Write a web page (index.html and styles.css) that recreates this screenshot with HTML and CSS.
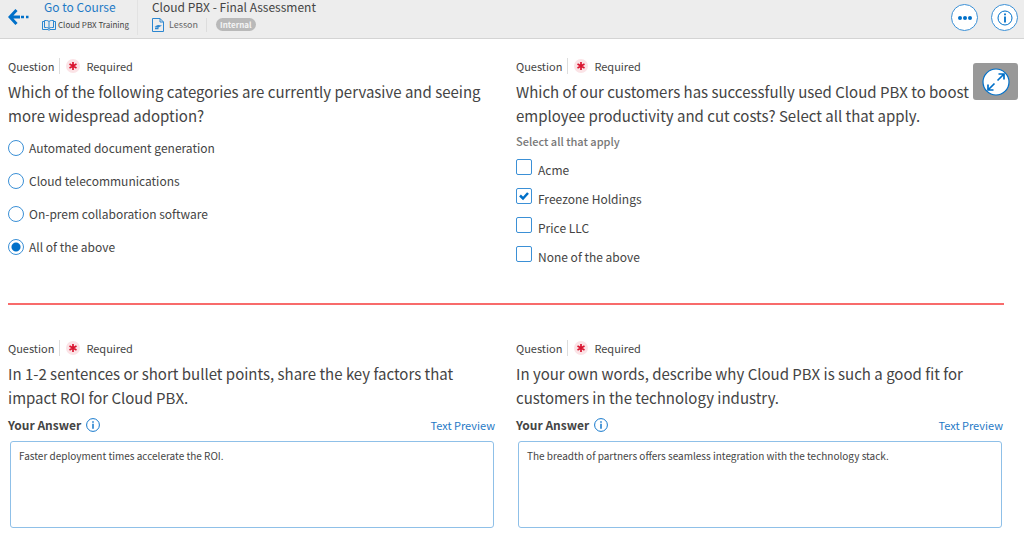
FILE: index.html
```html
<!DOCTYPE html>
<html lang="en">
<head>
<meta charset="utf-8">
<meta name="viewport" content="width=device-width, initial-scale=1">
<title>Cloud PBX - Final Assessment</title>
<link rel="stylesheet" href="styles.css">
</head>
<body>
<header class="topbar">
  <button class="back" type="button" aria-label="Back">
    <svg width="22" height="18" viewBox="0 0 22 18" fill="none" stroke="#0070c9" stroke-width="3"><path d="M8.500 2 2 9l6.500 7M2 9h10"/><path d="M13 9h3M18 9h2.500" stroke-width="2.600"/></svg>
  </button>
  <div class="crumb course">
    <a class="crumb-title" href="#course">Go to Course</a>
    <div class="crumb-meta small">
      <svg width="14" height="12" viewBox="0 0 14 12" fill="none" stroke="#2b86d0"><path d="M7 2.500Q6 1.500 4.500 1.500h-2v7h2Q6 8.500 7 9.500q1-1 2.500-1h2v-7h-2Q8 1.500 7 2.500zv7M2.500 2.500h-2v8h5.500l1 .8 1-.8h5.500v-8h-2"/></svg>
      <span>Cloud PBX Training</span>
    </div>
  </div>
  <div class="crumb lesson">
    <h1 class="crumb-title">Cloud PBX - Final Assessment</h1>
    <div class="crumb-meta">
      <svg width="12" height="14" viewBox="0 0 12 14" fill="none" stroke="#2b86d0"><path d="M.5.5h7.500l3.500 3.500v9.500H.5zM8 .5V4h3.500"/><path d="M2.500 8.500 6 7l4 .5-3.500 2zM3 9.500v1.800h3.500V9.500" fill="#2b86d0" stroke="none"/></svg>
      <span class="kind">Lesson</span>
      <span class="badge">Internal</span>
    </div>
  </div>
  <div class="actions">
    <button class="round" type="button" aria-label="More options">
      <svg width="16" height="6" viewBox="0 0 16 6" fill="#0070c9"><circle cx="3" cy="3" r="2"/><circle cx="8" cy="3" r="2"/><circle cx="13" cy="3" r="2"/></svg>
    </button>
    <button class="round" type="button" aria-label="Information">
      <svg width="16" height="16" viewBox="0 0 16 16" fill="none" stroke="#0070c9"><circle cx="8" cy="8" r="7"/><path d="M8 3.500v1.800M8 6.500v6" stroke-width="1.800"/></svg>
    </button>
  </div>
</header>

<main class="page">
  <button class="expand" type="button" aria-label="Full screen">
    <svg width="28" height="28" viewBox="0 0 28 28" fill="none" stroke="#0070c9"><circle cx="14" cy="14" r="13" fill="#fff" stroke-width="1.200"/><path d="M15.500 12.500 22 6M16.500 6H22v5.500M12.500 15.500 6 22M6 16.500V22h5.500" stroke-width="1.700"/></svg>
  </button>
  <div class="row choices">
    <section class="question">
      <div class="meta"><span class="type">Question</span><svg class="star" width="14" height="14" viewBox="0 0 14 14"><circle cx="7" cy="7" r="7" fill="#fbe3e6"/><path d="M7 3v8M3.500 5l7 4M10.500 5l-7 4" stroke="#d9142f" stroke-width="1.700"/></svg><span>Required</span></div>
      <h2 class="prompt" id="q1">Which of the following categories are currently pervasive and seeing more widespread adoption?</h2>
      <div class="radios" role="radiogroup" aria-labelledby="q1">
        <label class="radio"><input type="radio" name="category"><span>Automated document generation</span></label>
        <label class="radio"><input type="radio" name="category"><span>Cloud telecommunications</span></label>
        <label class="radio"><input type="radio" name="category"><span>On-prem collaboration software</span></label>
        <label class="radio"><input type="radio" name="category" checked><span>All of the above</span></label>
      </div>
    </section>
    <section class="question">
      <div class="meta"><span class="type">Question</span><svg class="star" width="14" height="14" viewBox="0 0 14 14"><circle cx="7" cy="7" r="7" fill="#fbe3e6"/><path d="M7 3v8M3.500 5l7 4M10.500 5l-7 4" stroke="#d9142f" stroke-width="1.700"/></svg><span>Required</span></div>
      <h2 class="prompt" id="q2">Which of our customers has successfully used Cloud PBX to boost employee productivity and cut costs? Select all that apply.</h2>
      <p class="hint">Select all that apply</p>
      <div class="checks" role="group" aria-labelledby="q2">
        <label class="check"><input type="checkbox"><span>Acme</span></label>
        <label class="check"><input type="checkbox" checked><span>Freezone Holdings</span></label>
        <label class="check"><input type="checkbox"><span>Price LLC</span></label>
        <label class="check"><input type="checkbox"><span>None of the above</span></label>
      </div>
    </section>
  </div>
  <div class="row">
    <section class="question">
      <div class="meta"><span class="type">Question</span><svg class="star" width="14" height="14" viewBox="0 0 14 14"><circle cx="7" cy="7" r="7" fill="#fbe3e6"/><path d="M7 3v8M3.500 5l7 4M10.500 5l-7 4" stroke="#d9142f" stroke-width="1.700"/></svg><span>Required</span></div>
      <h2 class="prompt">In 1-2 sentences or short bullet points, share the key factors that impact ROI for Cloud PBX.</h2>
      <div class="answer-head">
        <label for="a1">Your Answer</label>
        <svg width="14" height="14" viewBox="0 0 14 14" fill="none" stroke="#1478cc"><circle cx="7" cy="7" r="6.400"/><path d="M7 3.200v1.500M7 5.800v5" stroke-width="1.500"/></svg>
        <a class="preview" href="#preview">Text Preview</a>
      </div>
      <textarea class="answer" id="a1">Faster deployment times accelerate the ROI.</textarea>
    </section>
    <section class="question">
      <div class="meta"><span class="type">Question</span><svg class="star" width="14" height="14" viewBox="0 0 14 14"><circle cx="7" cy="7" r="7" fill="#fbe3e6"/><path d="M7 3v8M3.500 5l7 4M10.500 5l-7 4" stroke="#d9142f" stroke-width="1.700"/></svg><span>Required</span></div>
      <h2 class="prompt">In your own words, describe why Cloud PBX is such a good fit for customers in the technology industry.</h2>
      <div class="answer-head">
        <label for="a2">Your Answer</label>
        <svg width="14" height="14" viewBox="0 0 14 14" fill="none" stroke="#1478cc"><circle cx="7" cy="7" r="6.400"/><path d="M7 3.200v1.500M7 5.800v5" stroke-width="1.500"/></svg>
        <a class="preview" href="#preview">Text Preview</a>
      </div>
      <textarea class="answer" id="a2">The breadth of partners offers seamless integration with the technology stack.</textarea>
    </section>
  </div>
</main>
</body>
</html>
```

FILE: styles.css
```css
* { box-sizing: border-box; }

body {
  margin: 0;
  background: #fff;
  color: #444;
  font-family: "Noto Sans CJK SC", "Noto Sans", sans-serif;
  font-size: 12px;
}

h1, h2, p { margin: 0; font-weight: 400; }
a { color: #1f7ac6; text-decoration: none; }
button { padding: 0; border: 0; background: none; }
svg { display: block; flex: none; }

.topbar {
  display: flex;
  align-items: flex-start;
  padding: 0 6px 3px 8px;
  background: #ededed;
  border-bottom: 1px solid #d4d4d4;
}
.back { padding-top: 8px; }
.crumb-title {
  display: block;
  font-size: 12px;
  line-height: 14px;
  white-space: nowrap;
}
.course .crumb-title { padding-left: 2px; }
.crumb-meta {
  display: flex;
  align-items: center;
  height: 21px;
  font-size: 9px;
  color: #666;
  white-space: nowrap;
}
.course { padding: 0 8px 0 12px; }
.small { gap: 2px; font-size: 8px; color: #444; }
.lesson { padding-left: 14px; }
.course + .lesson { border-left: 1px solid #e2e2e2; }
.kind { padding: 0 8px 0 5px; border-right: 1px solid #ddd; line-height: 14px; }
.badge {
  margin-left: 9px;
  padding: 0 4px;
  border-radius: 7px;
  background: #b9b9b9;
  color: #f4f4f4;
  font-size: 8px;
  font-weight: 700;
  line-height: 13px;
}
.actions { display: flex; gap: 13px; margin-left: auto; padding-top: 4px; }
.round {
  display: grid;
  place-items: center;
  width: 27px;
  height: 27px;
  border: 1px solid #3b90d6;
  border-radius: 50%;
  background: #fff;
}

.page { position: relative; padding: 19px 20px 16px 8px; }
.expand {
  position: absolute;
  top: 24px;
  right: 6px;
  display: grid;
  place-items: center;
  width: 45px;
  height: 37px;
  border-radius: 3px;
  background: #999;
}
.row { display: grid; grid-template-columns: 1fr 1fr; gap: 20px; }
.choices { margin-bottom: 35px; padding-bottom: 35px; border-bottom: 2px solid #f86b6b; }

.meta { display: flex; align-items: center; height: 16px; font-size: 11px; line-height: 16px; }
.type { padding-right: 5px; border-right: 1px solid #ddd; }
.star { margin: 0 6px; }
.prompt { margin-top: 6px; font-size: 15px; line-height: 24px; }

.radios { display: grid; gap: 16px; margin-top: 11px; }
.radio { display: flex; align-items: center; gap: 5px; line-height: 17px; }
.radio input {
  appearance: none;
  width: 16px;
  height: 16px;
  margin: 0;
  border: 1px solid #3b90d6;
  border-radius: 50%;
}
.radio input:checked { background: radial-gradient(circle, #0070c9 4px, #fff 5px); }

.hint { margin-top: 5px; font-size: 11px; font-weight: 500; line-height: 16px; color: #777; }
.checks { display: grid; gap: 7px; margin-top: 10px; }
.check { display: flex; align-items: flex-start; gap: 6px; line-height: 22px; }
.check input {
  appearance: none;
  width: 16px;
  height: 16px;
  margin: 0;
  border: 1px solid #3b90d6;
  border-radius: 2px;
}
.check input:checked {
  background: center / 12px 12px no-repeat url("data:image/svg+xml,%3Csvg xmlns='http://www.w3.org/2000/svg' viewBox='0 0 12 12'%3E%3Cpath d='M2 5.500l3 3 5-5.500' fill='none' stroke='%230070c9' stroke-width='2.500'/%3E%3C/svg%3E");
}

.answer-head { display: flex; align-items: center; height: 18px; margin-top: 6px; padding-right: 1px; gap: 5px; }
.answer-head label { font-size: 12px; font-weight: 700; line-height: 18px; }
.preview { margin-left: auto; font-size: 11px; line-height: 16px; }
.answer {
  display: block;
  width: calc(100% - 4px);
  height: 87px;
  margin: 7px 2px 0;
  padding: 6px 8px;
  border: 1px solid #8fc0e8;
  border-radius: 3px;
  background: #fff;
  color: #444;
  font-family: inherit;
  font-size: 10px;
  line-height: 16px;
  resize: none;
}
```
